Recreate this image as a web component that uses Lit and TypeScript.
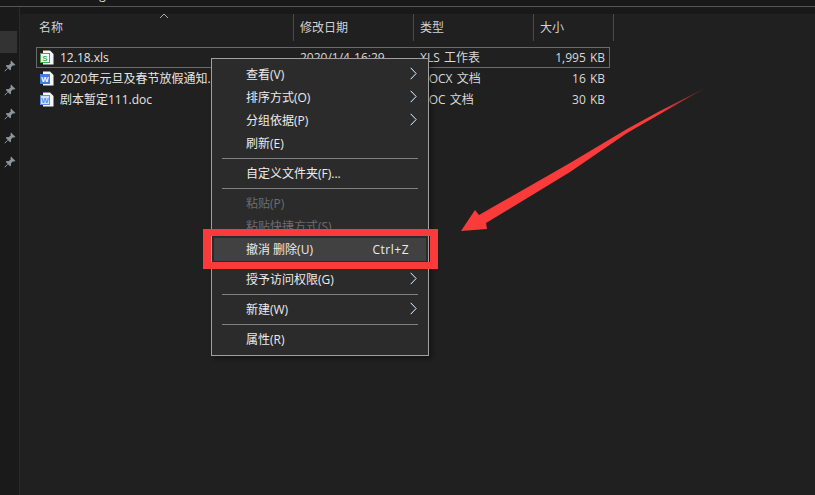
import { LitElement, html, css, svg } from "lit";
import { customElement } from "lit/decorators.js";

type Item =
  | { sep: true }
  | { label: string; sub?: boolean; dis?: boolean; hot?: boolean; key?: string };

const MENU: Item[] = [
  { label: "查看(V)", sub: true },
  { label: "排序方式(O)", sub: true },
  { label: "分组依据(P)", sub: true },
  { label: "刷新(E)" },
  { sep: true },
  { label: "自定义文件夹(F)..." },
  { sep: true },
  { label: "粘贴(P)", dis: true },
  { label: "粘贴快捷方式(S)", dis: true },
  { label: "撤消 删除(U)", hot: true, key: "Ctrl+Z" },
  { sep: true },
  { label: "授予访问权限(G)", sub: true },
  { sep: true },
  { label: "新建(W)", sub: true },
  { sep: true },
  { label: "属性(R)" },
];

const ROWS = [
  { icon: "xls", name: "12.18.xls", date: "2020/1/4 16:29", type: "XLS 工作表", size: "1,995 KB", sel: true },
  { icon: "doc", name: "2020年元旦及春节放假通知.", date: "", type: "DOCX 文档", size: "16 KB" },
  { icon: "doc2", name: "剧本暂定111.doc", date: "", type: "DOC 文档", size: "30 KB" },
];

const fileIcon = (kind: string) => {
  const xls = kind === "xls";
  const col = xls ? "#3fae49" : kind === "doc" ? "#3f7fe0" : "#5a90e6";
  const sq = xls
    ? svg`<rect x="0.5" y="3.5" width="9" height="9" fill="#fff" stroke="${col}"/>`
    : kind === "doc"
    ? svg`<rect x="0" y="3" width="10" height="10" fill="${col}"/>`
    : svg`<rect x="0.5" y="3.5" width="9" height="9" fill="#d6e4fb" stroke="${col}"/>`;
  return html`<svg class="ficon" width="14" height="15" viewBox="0 0 14 15">
    <path d="M3 0.5H10L13.5 4V14.5H3Z" fill="#f4f6f5" />
    ${sq}
    <text x="5" y="11" text-anchor="middle" font-size="8" font-weight="700" font-family="Liberation Sans, sans-serif" fill="${xls ? col : kind === "doc" ? "#fff" : col}">${xls ? "S" : "W"}</text>
  </svg>`;
};

const pin = html`<svg width="12" height="12" viewBox="0 0 12 12">
  <path d="M7 0.5L11.5 5L10.2 5.6L8.6 5.4L6.9 7.6L7 9.8L6 10.2L1.9 6L2.3 5L4.5 5.2L6.7 3.4L6.5 1.8Z" fill="#8d969c"/>
  <path d="M3.6 8.3L0.8 11.2" stroke="#8d969c" stroke-width="1"/>
</svg>`;

const chevron = html`<svg class="chev" width="7" height="13" viewBox="0 0 7 13">
  <path d="M0.8 0.8L6.2 6.5L0.8 12.2" fill="none" stroke="#d8dde0" stroke-width="1"/>
  <path d="M0.2 1.2L5.4 6.5L0.2 11.8" fill="none" stroke="#5fa0d8" stroke-width="0.5" opacity=".7"/>
</svg>`;

@customElement("app-root")
export class AppRoot extends LitElement {
  static styles = css`
    :host {
      display: block;
      position: relative;
      width: 815px;
      height: 495px;
      overflow: hidden;
      background: #202020;
      color: #e6e6e6;
      font: 12px/16px "Open Sans", "Noto Sans CJK SC", sans-serif;
    }
    .top {
      height: 6px;
      background: #191919;
      border-bottom: 1px solid #555;
      overflow: hidden;
      position: relative;
    }
    .crumb {
      margin: -13px 0 0 78px;
      color: #ddd;
      line-height: 16px;
    }
    .body {
      display: flex;
      height: 488px;
    }
    .side {
      width: 19px;
      flex: none;
      background: #1a1a1a;
      border-right: 1px solid #2b2b2b;
      padding-top: 24px;
      box-sizing: content-box;
    }
    .side-sel {
      width: 17px;
      height: 22px;
      background: #333;
    }
    .pins {
      display: flex;
      flex-direction: column;
      gap: 12px;
      padding: 7px 0 0 4px;
    }
    .pins svg {
      display: block;
    }
    .main {
      flex: 1;
      min-width: 0;
    }
    .band {
      height: 7px;
      background: #191919;
    }
    .head {
      display: grid;
      grid-template-columns: 274px 120px 120px 80px;
      width: 594px;
      height: 26px;
      position: relative;
    }
    .head div {
      border-right: 1px solid #4a4a4a;
      padding-left: 6px;
      line-height: 27px;
      color: #d2d2d2;
    }
    .head div:first-child {
      padding-left: 19px;
    }
    .caret {
      position: absolute;
      left: 139px;
      top: -1px;
    }
    .rows {
      padding: 7px 0 0 16px;
    }
    .row {
      display: grid;
      grid-template-columns: 258px 120px 120px 74px;
      height: 21px;
      width: 574px;
      box-sizing: border-box;
      align-items: center;
      border: 1px solid transparent;
      color: #e4e4e4;
    }
    .row.sel {
      border-color: #6b6b6b;
    }
    .name {
      display: flex;
      align-items: center;
      gap: 6px;
      padding-left: 3px;
      white-space: nowrap;
      overflow: hidden;
    }
    .ficon {
      flex: none;
    }
    .date,
    .type {
      padding-left: 5px;
      white-space: nowrap;
      color: #d8d8d8;
      word-spacing: 1px;
    }
    .size {
      text-align: right;
      white-space: nowrap;
      color: #d8d8d8;
      padding-right: 4px;
      word-spacing: 1px;
    }
    .menu {
      position: absolute;
      left: 211px;
      top: 58px;
      width: 218px;
      box-sizing: border-box;
      background: #2b2b2b;
      border: 1px solid #a0a0a0;
      padding: 4px 2px;
      box-shadow: 3px 3px 4px rgba(0, 0, 0, 0.35);
    }
    .mi {
      display: flex;
      align-items: center;
      height: 23px;
      padding-left: 32px;
      color: #ececec;
      white-space: nowrap;
      position: relative;
    }
    .mi.dis {
      color: #6d6d6d;
    }
    .mi.hot {
      background: #414141;
    }
    .key {
      margin-left: auto;
      margin-right: 17px;
      letter-spacing: 0.5px;
    }
    .chev {
      position: absolute;
      right: 9px;
      top: 4px;
    }
    .sep {
      height: 1px;
      margin: 3px 8px;
      background: #808080;
    }
    .redbox {
      position: absolute;
      left: 203px;
      top: 229px;
      width: 235px;
      height: 40px;
      box-sizing: border-box;
      border-style: solid;
      border-color: #fb3a3a;
      border-width: 7px 8px;
    }
    .arrow {
      position: absolute;
      left: 0;
      top: 0;
      pointer-events: none;
    }
  `;

  render() {
    return html`
      <div class="top"><div class="crumb">Song</div></div>
      <div class="body">
        <div class="side">
          <div class="side-sel"></div>
          <div class="pins">${[0, 1, 2, 3, 4].map(() => pin)}</div>
        </div>
        <div class="main">
          <div class="band"></div>
          <div class="head">
            <div>名称</div><div>修改日期</div><div>类型</div><div>大小</div>
            <svg class="caret" width="10" height="6" viewBox="0 0 10 6">
              <path d="M1 5L5 1L9 5" fill="none" stroke="#a8a8a8" />
            </svg>
          </div>
          <div class="rows">
            ${ROWS.map(
              (r) => html`<div class="row ${r.sel ? "sel" : ""}">
                <div class="name">${fileIcon(r.icon)}<span>${r.name}</span></div>
                <div class="date">${r.date}</div>
                <div class="type">${r.type}</div>
                <div class="size">${r.size}</div>
              </div>`
            )}
          </div>
        </div>
      </div>
      <div class="menu">
        ${MENU.map((m) =>
          "sep" in m
            ? html`<div class="sep"></div>`
            : html`<div class="mi ${m.dis ? "dis" : ""} ${m.hot ? "hot" : ""}">
                <span>${m.label}</span>
                ${m.key ? html`<span class="key">${m.key}</span>` : ""}
                ${m.sub ? chevron : ""}
              </div>`
        )}
      </div>
      <div class="redbox"></div>
      <svg class="arrow" width="815" height="495" viewBox="0 0 815 495">
        <defs>
          <linearGradient id="g" x1="707" y1="87" x2="660" y2="112" gradientUnits="userSpaceOnUse">
            <stop offset="0" stop-color="#4a2424" />
            <stop offset="1" stop-color="#fb3a3a" />
          </linearGradient>
        </defs>
        <path d="M461 231L475 210L479 215L570 163L627 129L660 111L707 87L660 114L627 133L570 172L486 223L487 229Z" fill="url(#g)" />
      </svg>
    `;
  }
}
